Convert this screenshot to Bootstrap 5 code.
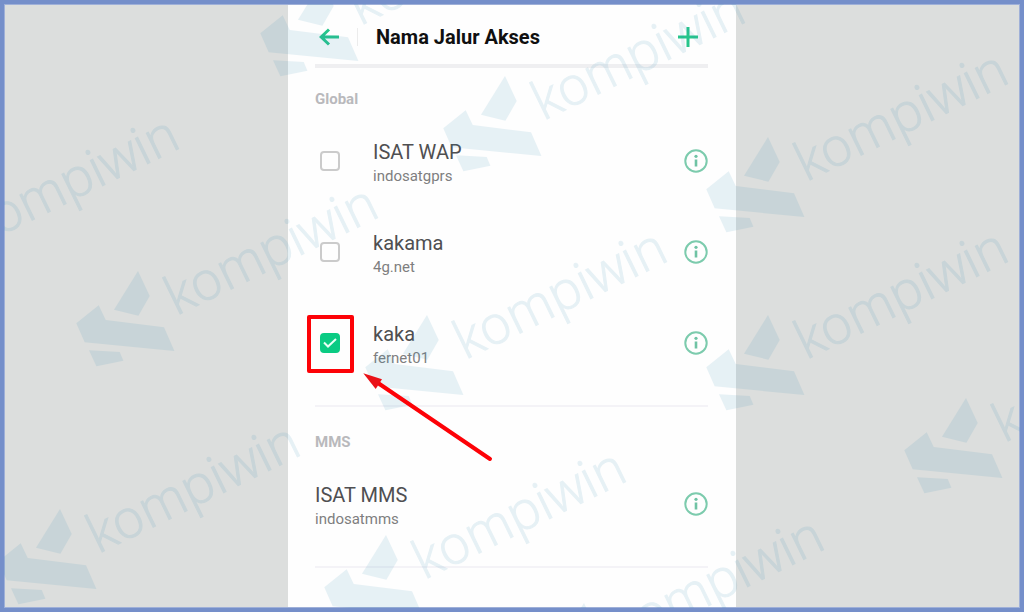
<!DOCTYPE html>
<html lang="id">
<head>
<meta charset="utf-8">
<meta name="viewport" content="width=device-width, initial-scale=1">
<title>Nama Jalur Akses</title>
<link href="https://cdn.jsdelivr.net/npm/bootstrap@5.3.0/dist/css/bootstrap.min.css" rel="stylesheet">
<style>
  body { background: #dcdedd; font-family: Roboto, "Liberation Sans", sans-serif; }
  .stage { border: 4px solid #758fca; box-shadow: inset 0 0 0 1px #9fb0d8; padding: 1px; }
  .phone { width: 100%; max-width: 448px; background: #fefefe; padding: 0 28px 0 27px; }
  .topbar { min-height: 63px; border-bottom: 4px solid #efeff1; padding: 4px 10px 0 4px; }
  .topbar h1 { font-size: 20px; line-height: 24px; font-weight: 700; color: #101010; padding-left: 18px; }
  .topbar .rule { width: 1px; height: 18px; background: #ececec; margin-left: 18px; }
  .bare { background: none; border: 0; padding: 0; line-height: 0; }
  .group { padding: 14px 0 17px; border-bottom: 2px solid #f4f3f7; }
  .group + .group { padding-top: 18px; }
  .group h2 { font-size: 15px; line-height: 34px; font-weight: 700; color: #b9b9bc; margin-bottom: -1px; }
  .apn { height: 91px; }
  .apn .form-check-input { width: 20px; height: 20px; margin: 0 33px 0 5px; border: 2px solid #cbcbcb; border-radius: 4px; background-color: #fefefe; }
  .apn .form-check-input:checked { border-color: #0acb83; background-color: #0acb83; background-size: 16px 16px; background-image: url("data:image/svg+xml,%3csvg xmlns='http://www.w3.org/2000/svg' viewBox='0 0 16 16'%3e%3cpath fill='none' stroke='%23e9fff5' stroke-width='2' d='M2 7.500l4 4L14 4'/%3e%3c/svg%3e"); }
  .apn label, .apn .caption { padding-top: 6px; }
  .apn .name, .apn .point { display: block; line-height: 24px; }
  .apn .name { font-size: 20px; color: #4f4f51; }
  .apn .point { font-size: 15px; color: #7e7e80; }
  .marker { left: -8px; top: 18px; width: 47px; height: 58px; border: 4px solid #fd0207; border-radius: 2px; pointer-events: none; }
  .pointer { left: 45px; top: 73px; pointer-events: none; }
  .watermark { pointer-events: none; overflow: hidden; fill: #2d8cb4; opacity: .11; }
  .watermark text { font-family: "Open Sans", sans-serif; font-weight: 300; font-size: 53px; stroke: #2d8cb4; stroke-width: 1px; }
</style>
</head>
<body>
<svg width="0" height="0" class="position-absolute" aria-hidden="true">
  <symbol id="info" viewBox="0 0 24 24">
    <circle cx="12" cy="12" r="10.7" fill="none" stroke="#7ccbad" stroke-width="2"/>
    <circle cx="12" cy="7.3" r="1.6" fill="#6fc3a4"/>
    <path d="M12 10.500V17.500" stroke="#6fc3a4" stroke-width="2.6"/>
  </symbol>
</svg>

<div class="stage position-relative min-vh-100 d-flex justify-content-center overflow-hidden">
  <main class="phone">
    <header class="topbar d-flex align-items-center">
      <button class="bare" type="button" aria-label="Kembali">
        <svg width="20" height="18" viewBox="0 0 20 18" fill="none" stroke="#27c58c" stroke-width="3"><path d="M20 9H2M10 1.500L2.200 9L10 16.500"/></svg>
      </button>
      <span class="rule"></span>
      <h1 class="mb-0 flex-grow-1">Nama Jalur Akses</h1>
      <button class="bare" type="button" aria-label="Tambah">
        <svg width="20" height="20" viewBox="0 0 20 20" fill="none" stroke="#27c58c" stroke-width="3"><path d="M0 10H20M10 0V20"/></svg>
      </button>
    </header>

    <section class="group">
      <h2>Global</h2>
      <div class="apn d-flex align-items-center">
        <input class="form-check-input flex-shrink-0" type="checkbox" id="apn1">
        <label class="flex-grow-1" for="apn1"><span class="name">ISAT WAP</span><span class="point">indosatgprs</span></label>
        <button class="bare" type="button" aria-label="Info ISAT WAP"><svg width="24" height="24"><use href="#info"/></svg></button>
      </div>
      <div class="apn d-flex align-items-center">
        <input class="form-check-input flex-shrink-0" type="checkbox" id="apn2">
        <label class="flex-grow-1" for="apn2"><span class="name">kakama</span><span class="point">4g.net</span></label>
        <button class="bare" type="button" aria-label="Info kakama"><svg width="24" height="24"><use href="#info"/></svg></button>
      </div>
      <div class="apn d-flex align-items-center position-relative">
        <input class="form-check-input flex-shrink-0" type="checkbox" id="apn3" checked>
        <label class="flex-grow-1" for="apn3"><span class="name">kaka</span><span class="point">fernet01</span></label>
        <button class="bare" type="button" aria-label="Info kaka"><svg width="24" height="24"><use href="#info"/></svg></button>
        <span class="marker position-absolute"></span>
        <svg class="pointer position-absolute z-2" width="136" height="96" viewBox="360 370 136 96" aria-hidden="true">
          <path d="M378 383L490 459" stroke="#fd0207" stroke-width="4" stroke-linecap="round"/>
          <path d="M363.300 373.300L382 379.300L375.700 389Z" fill="#ea1218"/>
        </svg>
      </div>
    </section>

    <section class="group">
      <h2>MMS</h2>
      <div class="apn d-flex align-items-center">
        <div class="caption flex-grow-1"><span class="name">ISAT MMS</span><span class="point">indosatmms</span></div>
        <button class="bare" type="button" aria-label="Info ISAT MMS"><svg width="24" height="24"><use href="#info"/></svg></button>
      </div>
    </section>
  </main>

  <!-- repeating brand mark; each use is placed by the tip of its logo -->
  <svg class="watermark position-absolute top-0 start-0 w-100 h-100" viewBox="4 4 1016 604" preserveAspectRatio="xMidYMid slice" aria-hidden="true">
    <defs>
      <g id="brand">
        <path d="M0 0L11.700 25L.4 44.700L-24 38.700Z"/>
        <path d="M-39.300 34.300L-32.300 49L26 56.300L36.400 80L-53.300 71.300L-61.700 52.300Z"/>
        <path d="M-49 79.300L-18.300 81L-14.600 89.700L-41.600 95.300Z"/>
        <text transform="translate(38 45) rotate(-26)">kompiwin</text>
      </g>
    </defs>
    <use href="#brand" x="322" y="-19"/>
    <use href="#brand" x="505" y="76"/>
    <use href="#brand" x="768" y="137"/>
    <use href="#brand" x="-61" y="202"/>
    <use href="#brand" x="138" y="271"/>
    <use href="#brand" x="427" y="315"/>
    <use href="#brand" x="768" y="315"/>
    <use href="#brand" x="966" y="398"/>
    <use href="#brand" x="60" y="509"/>
    <use href="#brand" x="386" y="535"/>
    <use href="#brand" x="584" y="603"/>
  </svg>
</div>
<script src="https://cdn.jsdelivr.net/npm/bootstrap@5.3.0/dist/js/bootstrap.bundle.min.js"></script>
</body>
</html>
